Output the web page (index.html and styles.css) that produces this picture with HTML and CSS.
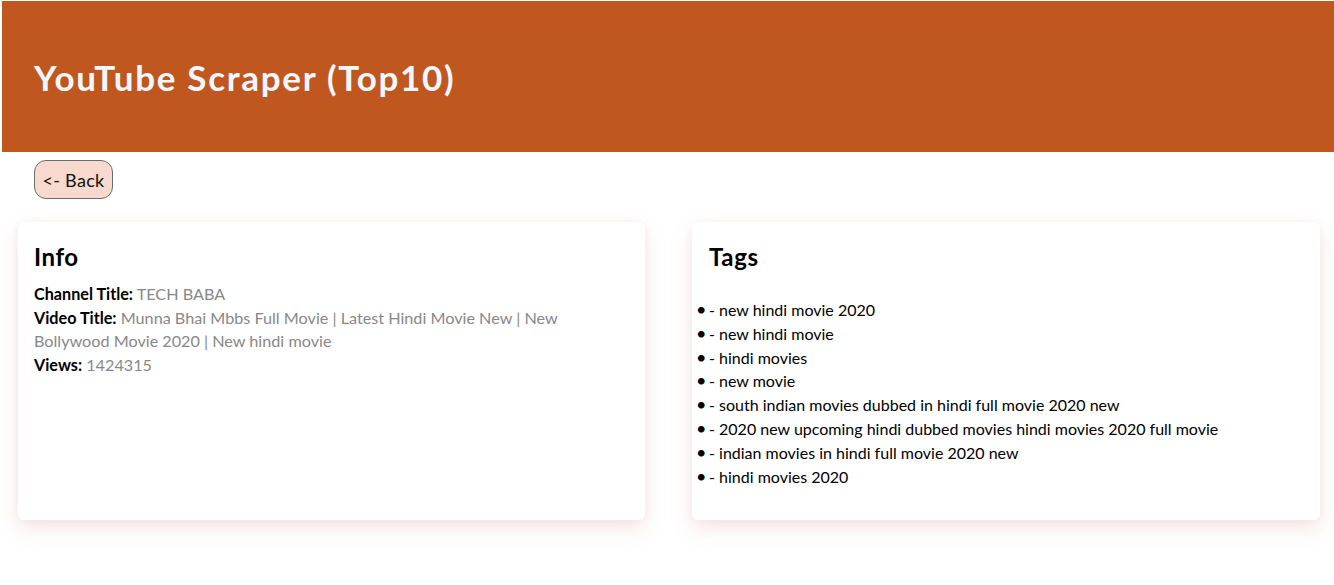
FILE: index.html
```html
<!DOCTYPE html>
<html>
<head>
<meta charset="utf-8">
<link rel="stylesheet" href="styles.css">
</head>
<body>
<header class="header">
  <h1 class="title">YouTube Scraper (Top10)</h1>
</header>
<div class="toolbar">
  <button class="back">&lt;- Back</button>
</div>
<main class="cards">
  <section class="card info">
    <h2 class="card-title">Info</h2>
    <div class="row"><b>Channel Title:</b> <span class="val">TECH BABA</span></div>
    <div class="row"><b>Video Title:</b> <span class="val">Munna Bhai Mbbs Full Movie | Latest Hindi Movie New | New Bollywood Movie 2020 | New hindi movie</span></div>
    <div class="row"><b>Views:</b> <span class="val">1424315</span></div>
  </section>
  <section class="card tags">
    <h2 class="card-title tags-title">Tags</h2>
    <ul class="tag-list">
      <li>- new hindi movie 2020</li>
      <li>- new hindi movie</li>
      <li>- hindi movies</li>
      <li>- new movie</li>
      <li>- south indian movies dubbed in hindi full movie 2020 new</li>
      <li>- 2020 new upcoming hindi dubbed movies hindi movies 2020 full movie</li>
      <li>- indian movies in hindi full movie 2020 new</li>
      <li>- hindi movies 2020</li>
    </ul>
  </section>
</main>
</body>
</html>
```
FILE: styles.css
```css
* { box-sizing: border-box; }
body {
  margin: 0;
  font-family: "Lato", "Liberation Sans", sans-serif;
  color: #000;
  background: #fff;
}
.header {
  margin: 1px 0 0 2px;
  height: 151px;
  background: #c0571f;
  display: flex;
  align-items: center;
  padding-left: 32px;
}
.title {
  margin: 0;
  color: #f0f8ff;
  font-size: 35px;
  font-weight: 700;
  letter-spacing: 1.7px;
}
.toolbar {
  padding: 8px 0 0 34px;
}
.back {
  font-family: inherit;
  font-size: 18px;
  color: #111;
  background: #f7dacd;
  border: 1px solid #6b6b6b;
  border-radius: 12px;
  height: 39px;
  width: 79px;
  padding: 0;
  letter-spacing: 0.3px;
}
.cards {
  display: grid;
  grid-template-columns: 627px 628px;
  column-gap: 47px;
  padding: 23px 0 30px 18px;
}
.card {
  background: #fff;
  border-radius: 6px;
  box-shadow: 0 9px 20px rgba(225, 160, 160, 0.26), 0 0 6px rgba(200, 170, 170, 0.12);
  height: 298px;
}
.info { padding: 20px 24px 20px 16px; }
.card-title {
  margin: 0 0 11px;
  font-size: 24px;
  font-weight: 700;
  letter-spacing: 0.6px;
}
.row {
  font-size: 16.2px;
  line-height: 23.6px;
}
.row b { font-weight: 700; }
.val { color: #888; }
.tags { padding: 20px 0; }
.tags-title { margin-left: 17px; margin-bottom: 27px; }
.tag-list {
  margin: 0;
  padding-left: 17px;
  list-style: none;
  font-size: 16px;
  line-height: 23.8px;
}
.tag-list li::before {
  content: "•";
  display: inline-block;
  width: 13px;
  margin-left: -13px;
  font-size: 18px;
}
```
